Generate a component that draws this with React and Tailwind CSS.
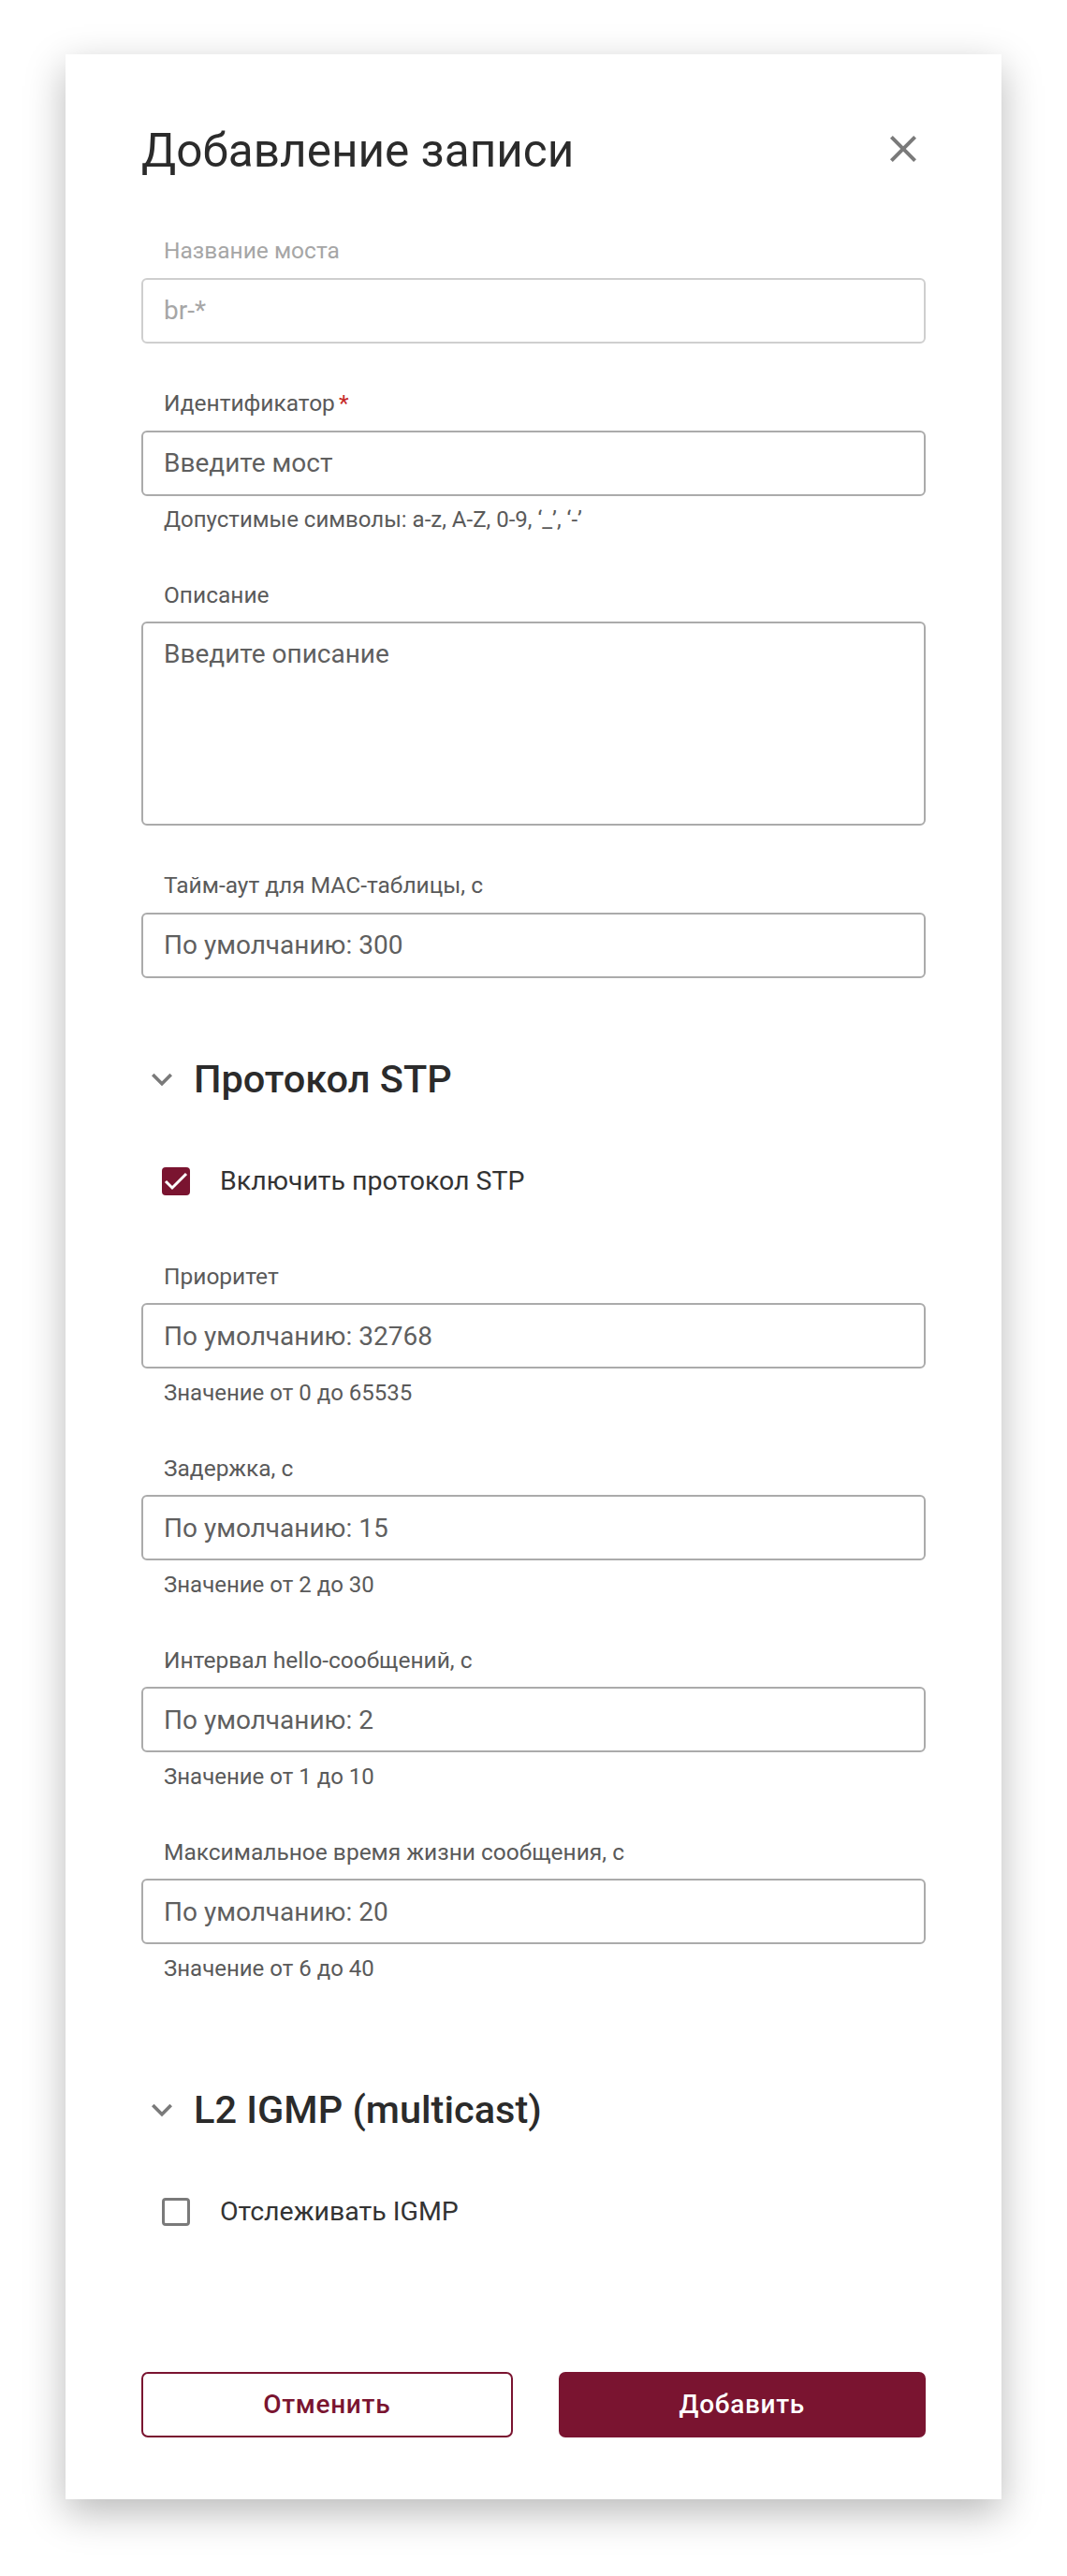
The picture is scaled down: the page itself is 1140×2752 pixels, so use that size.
import React, { useState } from "react";

function CloseIcon() {
  return (
    <svg viewBox="0 0 24 24" className="h-[48px] w-[48px] fill-[#7a7a7a]">
      <path d="M19 6.41L17.59 5 12 10.59 6.41 5 5 6.41 10.59 12 5 17.59 6.41 19 12 13.41 17.59 19 19 17.59 13.41 12z" />
    </svg>
  );
}

function Chevron() {
  return (
    <svg viewBox="0 0 24 24" className="h-[44px] w-[44px] fill-[#7a7a7a]">
      <path d="M16.59 8.59L12 13.17 7.41 8.59 6 10l6 6 6-6z" />
    </svg>
  );
}

function Field({ label, placeholder, hint, disabled, required }) {
  return (
    <div className="flex flex-col">
      <label
        className={
          disabled
            ? "pl-6 text-[24.5px] leading-[32px] text-[#a6a6a6]"
            : "pl-6 text-[24.5px] leading-[32px] text-[#5a5a5a]"
        }
      >
        {label}
        {required && <span className="ml-1 text-[#c62828]">*</span>}
      </label>
      <input
        type="text"
        disabled={disabled}
        placeholder={placeholder}
        className={
          disabled
            ? "mt-[12.6px] h-[70px] w-full rounded-[6px] border-2 border-[#cfcfcf] bg-white px-[22px] text-[28px] placeholder:text-[#a6a6a6] outline-none"
            : "mt-[12.6px] h-[70px] w-full rounded-[6px] border-2 border-[#ababab] bg-white px-[22px] text-[28px] text-[#333] placeholder:text-[#5f5f5f] outline-none"
        }
      />
      {hint && (
        <p className="mt-[9.4px] pl-6 text-[24px] leading-[32px] text-[#5a5a5a]">{hint}</p>
      )}
    </div>
  );
}

function Section({ title }) {
  return (
    <div className="flex h-[48px] items-center gap-3">
      <Chevron />
      <h3 className="text-[41.5px] font-medium leading-[48px] text-[#2b2b2b]">{title}</h3>
    </div>
  );
}

function Check({ checked, onChange, label }) {
  return (
    <label className="flex h-[30px] cursor-pointer items-center gap-[32px] pl-[22px]">
      <span
        onClick={onChange}
        className={
          checked
            ? "flex h-[30px] w-[30px] items-center justify-center rounded-[4px] bg-[#7a1430]"
            : "flex h-[30px] w-[30px] items-center justify-center rounded-[4px] border-[3px] border-[#7a7a7a] bg-white"
        }
      >
        {checked && (
          <svg viewBox="0 0 30 30" className="h-[30px] w-[30px]">
            <polyline points="4,15 11,22 26,7" fill="none" stroke="white" strokeWidth="3" />
          </svg>
        )}
      </span>
      <span className="text-[28.5px] leading-[30px] text-[#333]">{label}</span>
    </label>
  );
}

export default function App() {
  const [stp, setStp] = useState(true);
  const [igmp, setIgmp] = useState(false);

  return (
    <div className="min-h-screen bg-white pb-[85px] pt-[58px] font-['Roboto',sans-serif]">
      <div className="ml-[70px] w-[1000px] bg-white px-[81px] pb-[66px] pt-[75px] shadow-[0_14px_40px_rgba(0,0,0,0.28)]">
        <div className="flex items-start justify-between">
          <h2 className="text-[49.5px] leading-[56px] text-[#2b2b2b]">Добавление записи</h2>
          <button className="mt-[2px]">
            <CloseIcon />
          </button>
        </div>

        <div className="mt-[63px] flex flex-col gap-[48.5px]">
          <Field label="Название моста" placeholder="br-*" disabled />
          <Field
            label="Идентификатор"
            placeholder="Введите мост"
            hint="Допустимые символы: a-z, A-Z, 0-9, ‘_’, ‘-’"
            required
          />
          <div className="flex flex-col">
            <label className="pl-6 text-[24.5px] leading-[32px] text-[#5a5a5a]">Описание</label>
            <textarea
              placeholder="Введите описание"
              className="mt-[12px] h-[218px] w-full resize-none rounded-[6px] border-2 border-[#ababab] px-[22px] py-[14px] text-[28px] leading-[38px] text-[#333] placeholder:text-[#5f5f5f] outline-none"
            />
          </div>
          <Field label="Тайм-аут для MAC-таблицы, с" placeholder="По умолчанию: 300" />
        </div>

        <div className="mt-[84px]">
          <Section title="Протокол STP" />
        </div>
        <div className="mt-[70px]">
          <Check checked={stp} onChange={() => setStp(!stp)} label="Включить протокол STP" />
        </div>

        <div className="mt-[71px] flex flex-col gap-[49px]">
          <Field label="Приоритет" placeholder="По умолчанию: 32768" hint="Значение от 0 до 65535" />
          <Field label="Задержка, с" placeholder="По умолчанию: 15" hint="Значение от 2 до 30" />
          <Field label="Интервал hello-сообщений, с" placeholder="По умолчанию: 2" hint="Значение от 1 до 10" />
          <Field
            label="Максимальное время жизни сообщения, с"
            placeholder="По умолчанию: 20"
            hint="Значение от 6 до 40"
          />
        </div>

        <div className="mt-[111px]">
          <Section title="L2 IGMP (multicast)" />
        </div>
        <div className="mt-[70px]">
          <Check checked={igmp} onChange={() => setIgmp(!igmp)} label="Отслеживать IGMP" />
        </div>

        <div className="mt-[156px] flex gap-[49px]">
          <button className="h-[70px] flex-1 rounded-[7px] border-2 border-[#7a1430] bg-white text-[28px] font-medium tracking-wide text-[#7a1430]">
            Отменить
          </button>
          <button className="h-[70px] flex-1 rounded-[7px] bg-[#7a1430] text-[28px] font-medium tracking-wide text-white">
            Добавить
          </button>
        </div>
      </div>
    </div>
  );
}
